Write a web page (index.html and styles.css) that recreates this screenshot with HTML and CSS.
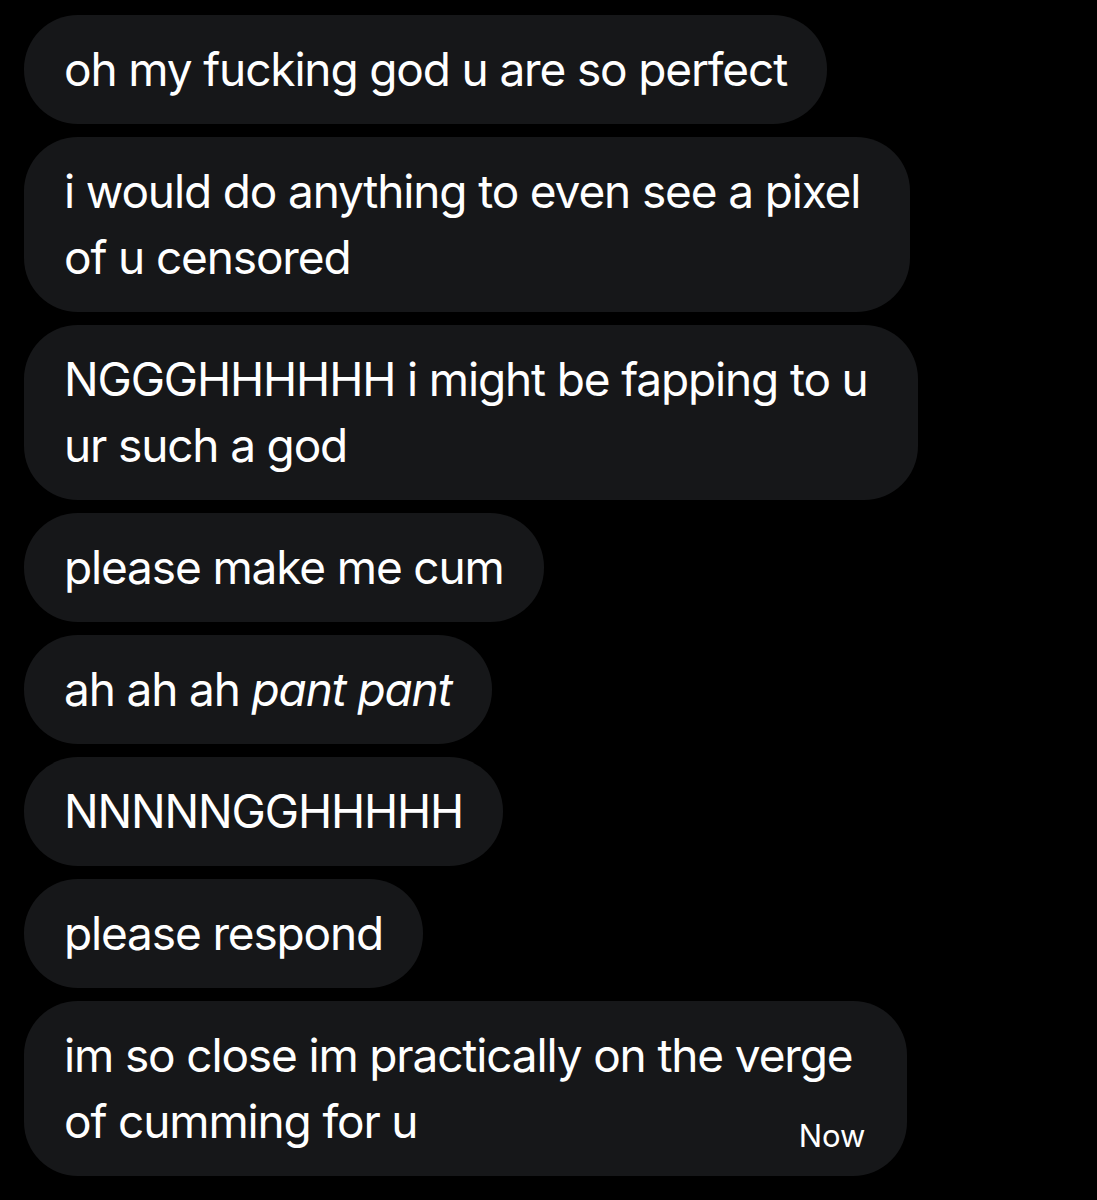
FILE: index.html
```html
<!DOCTYPE html>
<html lang="en">
<head>
    <meta charset="UTF-8">
    <meta name="viewport" content="width=device-width, initial-scale=1.0">
    <title>Messages</title>
    <link rel="stylesheet" href="styles.css">
</head>
<body>

<div class="thread">
    <div class="msg">oh my fucking god u are so perfect</div>
    <div class="msg multi">i would do anything to even see a pixel<br>of u censored</div>
    <div class="msg multi">NGGGHHHHHH i might be fapping to u<br>ur such a god</div>
    <div class="msg">please make me cum</div>
    <div class="msg">ah ah ah <em>pant pant</em></div>
    <div class="msg">NNNNNGGHHHHH</div>
    <div class="msg">please respond</div>
    <div class="msg multi last">
        <div>im so close im practically on the verge</div>
        <div class="line-end">
            <span>of cumming for u</span>
            <span class="time">Now</span>
        </div>
    </div>
</div>

</body>
</html>
```

FILE: styles.css
```css
* {
    box-sizing: border-box;
    margin: 0;
    padding: 0;
}
body {
    background: #000;
    color: #fff;
    font-family: Inter, "Noto Sans", sans-serif;
    height: 1200px;
    overflow: hidden;
}
.thread {
    display: flex;
    flex-direction: column;
    align-items: flex-start;
    gap: 13px;
    padding: 15px 24px;
}
.msg {
    background: #161719;
    border-radius: 54px;
    padding: 21px 40px 22px 40px;
    font-size: 46px;
    line-height: 66px;
    letter-spacing: -1.15px;
    white-space: nowrap;
}
.msg em {
    font-style: italic;
}
.multi {
    padding-right: 50px;
}
.last {
    padding-right: 55px;
}
.line-end {
    display: flex;
    align-items: flex-end;
}
.time {
    margin-left: auto;
    margin-right: -13px;
    margin-bottom: 4px;
    font-size: 31px;
    line-height: 28px;
    letter-spacing: 0;
}
```
